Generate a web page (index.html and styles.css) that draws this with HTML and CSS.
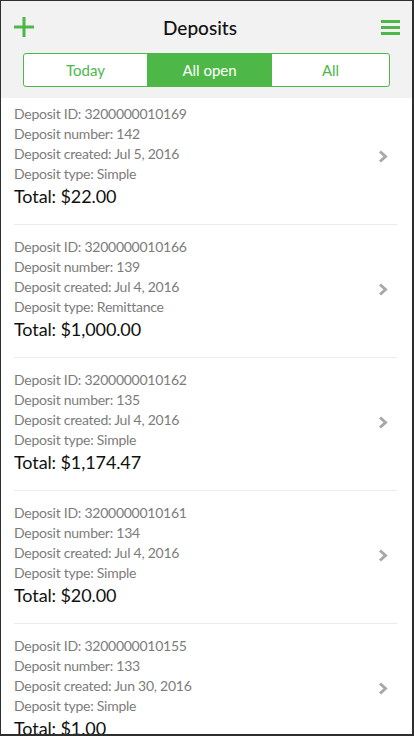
FILE: index.html
```html
<!DOCTYPE html>
<html>
<head>
<meta charset="utf-8">
<link rel="stylesheet" href="styles.css">
</head>
<body>
<div class="frame">
  <header class="header">
    <div class="topbar">
      <button class="icon-btn plus" aria-label="Add">
        <svg width="20" height="20" viewBox="0 0 20 20"><path d="M10 0V20M0 10H20" stroke="#4db848" stroke-width="3"/></svg>
      </button>
      <h1 class="title">Deposits</h1>
      <button class="icon-btn menu" aria-label="Menu">
        <svg width="19" height="15" viewBox="0 0 19 15"><path d="M0 1.5H19M0 7.5H19M0 13.5H19" stroke="#4db848" stroke-width="3"/></svg>
      </button>
    </div>
    <div class="segments">
      <div class="seg">Today</div>
      <div class="seg active">All open</div>
      <div class="seg">All</div>
    </div>
  </header>
  <ul class="list">
    <li class="item">
      <div class="info">
        <div class="line">Deposit ID: 3200000010169</div>
        <div class="line">Deposit number: 142</div>
        <div class="line">Deposit created: Jul 5, 2016</div>
        <div class="line">Deposit type: Simple</div>
        <div class="total">Total: $22.00</div>
      </div>
      <svg class="chev" width="10" height="13" viewBox="0 0 10 13"><path d="M2 1.5L7.5 6.5L2 11.5" fill="none" stroke="#a8a8a8" stroke-width="3"/></svg>
    </li>
    <li class="item">
      <div class="info">
        <div class="line">Deposit ID: 3200000010166</div>
        <div class="line">Deposit number: 139</div>
        <div class="line">Deposit created: Jul 4, 2016</div>
        <div class="line">Deposit type: Remittance</div>
        <div class="total">Total: $1,000.00</div>
      </div>
      <svg class="chev" width="10" height="13" viewBox="0 0 10 13"><path d="M2 1.5L7.5 6.5L2 11.5" fill="none" stroke="#a8a8a8" stroke-width="3"/></svg>
    </li>
    <li class="item">
      <div class="info">
        <div class="line">Deposit ID: 3200000010162</div>
        <div class="line">Deposit number: 135</div>
        <div class="line">Deposit created: Jul 4, 2016</div>
        <div class="line">Deposit type: Simple</div>
        <div class="total">Total: $1,174.47</div>
      </div>
      <svg class="chev" width="10" height="13" viewBox="0 0 10 13"><path d="M2 1.5L7.5 6.5L2 11.5" fill="none" stroke="#a8a8a8" stroke-width="3"/></svg>
    </li>
    <li class="item">
      <div class="info">
        <div class="line">Deposit ID: 3200000010161</div>
        <div class="line">Deposit number: 134</div>
        <div class="line">Deposit created: Jul 4, 2016</div>
        <div class="line">Deposit type: Simple</div>
        <div class="total">Total: $20.00</div>
      </div>
      <svg class="chev" width="10" height="13" viewBox="0 0 10 13"><path d="M2 1.5L7.5 6.5L2 11.5" fill="none" stroke="#a8a8a8" stroke-width="3"/></svg>
    </li>
    <li class="item">
      <div class="info">
        <div class="line">Deposit ID: 3200000010155</div>
        <div class="line">Deposit number: 133</div>
        <div class="line">Deposit created: Jun 30, 2016</div>
        <div class="line">Deposit type: Simple</div>
        <div class="total">Total: $1.00</div>
      </div>
      <svg class="chev" width="10" height="13" viewBox="0 0 10 13"><path d="M2 1.5L7.5 6.5L2 11.5" fill="none" stroke="#a8a8a8" stroke-width="3"/></svg>
    </li>
  </ul>
</div>
</body>
</html>
```
FILE: styles.css
```css
* { box-sizing: border-box; }
html, body { margin: 0; padding: 0; }
body {
  font-family: Lato, "Liberation Sans", sans-serif;
  background: #ffffff;
}
.frame {
  width: 414px;
  height: 736px;
  overflow: hidden;
  border-left: 1px solid #2e2e2e;
  border-top: 1px solid #2e2e2e;
  border-right: 2px solid #2e2e2e;
  border-bottom: 2px solid #2e2e2e;
  background: #ffffff;
}
.header {
  background: #f2f2f2;
  height: 97px;
}
.topbar {
  height: 52px;
  display: flex;
  align-items: center;
  padding: 0 12px 0 13px;
}
.icon-btn {
  border: 0;
  background: none;
  padding: 0;
  width: 20px;
  height: 20px;
  display: flex;
  align-items: center;
  justify-content: center;
}
.menu { margin-top: 1px; }
.title {
  flex: 1;
  margin: 0;
  padding-right: 14px;
  text-align: center;
  font-size: 19px;
  font-weight: 500;
  color: #111;
}
.segments {
  display: grid;
  grid-template-columns: 123px 125px 1fr;
  margin: 0 22px;
  height: 34px;
  border: 1px solid #4db848;
  border-radius: 3px;
  background: #ffffff;
  overflow: hidden;
}
.seg {
  display: flex;
  align-items: center;
  justify-content: center;
  font-size: 15px;
  color: #4db848;
}
.seg.active {
  background: #4db848;
  color: #ffffff;
}
.list {
  list-style: none;
  margin: 0;
  padding: 0 15px 0 13px;
}
.item {
  display: flex;
  align-items: center;
  padding: 12px 9px 16px 0;
  border-bottom: 1px solid #ebebeb;
}
.item:first-child { padding-top: 6px; }
.info { flex: 1; }
.line {
  font-size: 14px;
  letter-spacing: -0.25px;
  line-height: 20px;
  color: #7c7c7c;
}
.total {
  font-size: 18px;
  letter-spacing: -0.1px;
  line-height: 24px;
  color: #111;
}
.chev { display: block; }
```
